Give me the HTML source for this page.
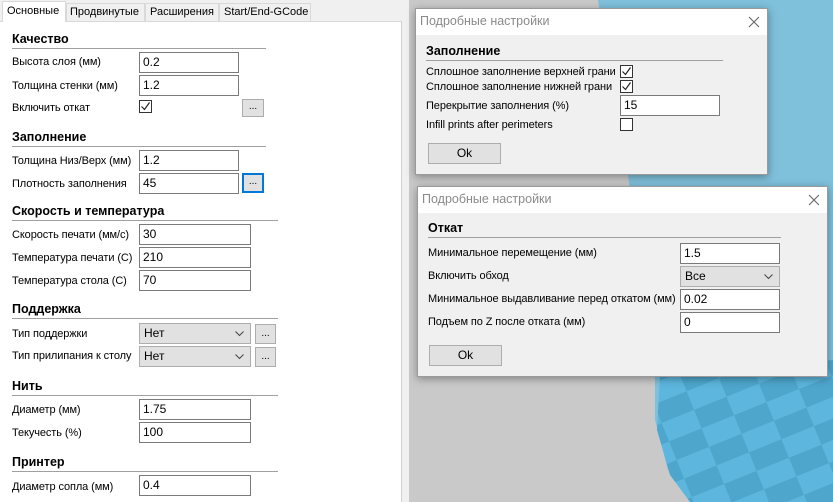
<!DOCTYPE html>
<html><head><meta charset="utf-8"><style>
*{box-sizing:border-box;margin:0;padding:0}
body{width:833px;height:502px;overflow:hidden;position:relative;background:#c9c9c9;font-family:"Liberation Sans","Noto Sans CJK JP",sans-serif;font-size:11px;color:#000}
.abs{position:absolute;white-space:nowrap}
.lbl{position:absolute;white-space:nowrap;letter-spacing:-0.1px}
.inp{position:absolute;background:#fff;border:1px solid #7a7a7a;height:21px;padding:2px 3px;font-size:12px;line-height:15px}
.sec{position:absolute;font-weight:bold;font-size:12.5px;border-bottom:1px solid #a0a0a0;padding-bottom:2px}
.btn{position:absolute;background:#e1e1e1;border:1px solid #adadad;font-size:10px;text-align:center;line-height:14px}
.cb{position:absolute;width:13px;height:13px;border:1px solid #333;background:#fff}
.cb svg{position:absolute;left:0px;top:0px}
.sel{position:absolute;background:#e1e1e1;border:1px solid #adadad;height:21px;padding:2px 4px;font-size:12px;line-height:15px}
.sel svg{position:absolute;right:6px;top:7px}
.dlg{position:absolute;background:#f0f0f0;border:1px solid #9a9a9a;box-shadow:0 2px 8px rgba(0,0,0,.35)}
.tt{height:26px;background:#fff;color:#8a8a8a;font-size:12.5px;padding:5px 0 0 4px;position:relative}
.tt svg{position:absolute;top:7px}
.okb{position:absolute;background:#e1e1e1;border:1px solid #adadad;width:73px;height:21px;text-align:center;font-size:12px;line-height:19px}
.tab{position:absolute;font-size:11px;white-space:nowrap;border:1px solid #d9d9d9;border-bottom:none}
</style></head><body>
<svg class="abs" style="left:0;top:0" width="833" height="502">
<defs><pattern id="ck" width="70" height="40" patternUnits="userSpaceOnUse" patternTransform="rotate(-22)">
<rect width="70" height="40" fill="#5cb6dd"/><rect width="35" height="20" fill="#4ea6cc"/><rect x="35" y="20" width="35" height="20" fill="#4ea6cc"/></pattern></defs>
<polygon points="598,0 833,0 833,502 690,502 668,470 655,420 655,380 628,175" fill="#7fc0db"/>
<polygon points="660,375 833,360 833,502 690,502 670,475 657,430" fill="url(#ck)"/>
</svg>
<div class="abs" style="left:0;top:0;width:409px;height:502px;background:#f0f0f0"></div>
<div class="abs" style="left:0;top:21px;width:402px;height:481px;background:#fff;border-right:1px solid #d0d0d0;border-top:1px solid #d9d9d9"></div>
<div class="tab" style="left:2px;top:1px;width:64px;height:21px;background:#fff;padding:3px 4px">Основные</div>
<div class="tab" style="left:66px;top:3px;width:79px;height:18px;padding:2px 3px">Продвинутые</div>
<div class="tab" style="left:145px;top:3px;width:74px;height:18px;padding:2px 4px">Расширения</div>
<div class="tab" style="left:219px;top:3px;width:92px;height:18px;padding:2px 4px">Start/End-GCode</div>

<div class="sec" style="left:12px;top:32px;width:254px">Качество</div>
<div class="lbl" style="left:12px;top:56px">Высота слоя (мм)</div><div class="inp" style="left:139px;top:52px;width:100px">0.2</div>
<div class="lbl" style="left:12px;top:80px">Толщина стенки (мм)</div><div class="inp" style="left:139px;top:75px;width:100px">1.2</div>
<div class="lbl" style="left:12px;top:102px">Включить откат</div>
<div class="cb" style="left:139px;top:100px"><svg width="11" height="11"><path d="M1.5 5.5l3 3 5-7" stroke="#222" fill="none" stroke-width="1.2"/></svg></div>
<div class="btn" style="left:242px;top:99px;width:22px;height:18px">...</div>

<div class="sec" style="left:12px;top:130px;width:254px">Заполнение</div>
<div class="lbl" style="left:12px;top:155px">Толщина Низ/Верх (мм)</div><div class="inp" style="left:139px;top:150px;width:100px">1.2</div>
<div class="lbl" style="left:12px;top:178px">Плотность заполнения</div><div class="inp" style="left:139px;top:173px;width:100px">45</div>
<div class="btn" style="left:242px;top:173px;width:22px;height:20px;border:2px solid #0078d7">...</div>

<div class="sec" style="left:12px;top:204px;width:266px">Скорость и температура</div>
<div class="lbl" style="left:12px;top:229px">Скорость печати (мм/с)</div><div class="inp" style="left:139px;top:224px;width:112px">30</div>
<div class="lbl" style="left:12px;top:252px">Температура печати (С)</div><div class="inp" style="left:139px;top:247px;width:112px">210</div>
<div class="lbl" style="left:12px;top:275px">Температура стола (С)</div><div class="inp" style="left:139px;top:270px;width:112px">70</div>

<div class="sec" style="left:12px;top:302px;width:266px">Поддержка</div>
<div class="lbl" style="left:12px;top:328px">Тип поддержки</div>
<div class="sel" style="left:139px;top:323px;width:112px">Нет<svg width="9" height="6"><path d="M0.5 0.5l4 4 4-4" stroke="#444" fill="none"/></svg></div>
<div class="btn" style="left:255px;top:324px;width:21px;height:20px;line-height:18px">...</div>
<div class="lbl" style="left:12px;top:350px">Тип прилипания к столу</div>
<div class="sel" style="left:139px;top:346px;width:112px">Нет<svg width="9" height="6"><path d="M0.5 0.5l4 4 4-4" stroke="#444" fill="none"/></svg></div>
<div class="btn" style="left:255px;top:347px;width:21px;height:20px;line-height:18px">...</div>

<div class="sec" style="left:12px;top:379px;width:266px">Нить</div>
<div class="lbl" style="left:12px;top:404px">Диаметр (мм)</div><div class="inp" style="left:139px;top:399px;width:112px">1.75</div>
<div class="lbl" style="left:12px;top:427px">Текучесть (%)</div><div class="inp" style="left:139px;top:422px;width:112px">100</div>
<div class="sec" style="left:12px;top:455px;width:266px">Принтер</div>
<div class="lbl" style="left:12px;top:481px">Диаметр сопла (мм)</div><div class="inp" style="left:139px;top:475px;width:112px">0.4</div>

<div class="dlg" style="left:415px;top:8px;width:353px;height:167px">
<div class="tt">Подробные настройки<svg style="left:332px" width="12" height="12"><path d="M1 1l10 10M11 1L1 11" stroke="#666" stroke-width="1.1"/></svg></div>
<div class="sec" style="left:10px;top:35px;width:297px">Заполнение</div>
<div class="lbl" style="left:10px;top:57px">Сплошное заполнение верхней грани</div>
<div class="cb" style="left:204px;top:56px"><svg width="11" height="11"><path d="M1.5 5.5l3 3 5-7" stroke="#222" fill="none" stroke-width="1.2"/></svg></div>
<div class="lbl" style="left:10px;top:72px">Сплошное заполнение нижней грани</div>
<div class="cb" style="left:204px;top:71px"><svg width="11" height="11"><path d="M1.5 5.5l3 3 5-7" stroke="#222" fill="none" stroke-width="1.2"/></svg></div>
<div class="lbl" style="left:10px;top:91px">Перекрытие заполнения (%)</div>
<div class="inp" style="left:204px;top:86px;width:100px">15</div>
<div class="lbl" style="left:10px;top:110px">Infill prints after perimeters</div>
<div class="cb" style="left:204px;top:109px"></div>
<div class="okb" style="left:12px;top:134px">Ok</div>
</div>

<div class="dlg" style="left:417px;top:186px;width:411px;height:191px">
<div class="tt">Подробные настройки<svg style="left:390px" width="12" height="12"><path d="M1 1l10 10M11 1L1 11" stroke="#666" stroke-width="1.1"/></svg></div>
<div class="sec" style="left:10px;top:34px;width:353px">Откат</div>
<div class="lbl" style="left:10px;top:60px">Минимальное перемещение (мм)</div>
<div class="inp" style="left:262px;top:56px;width:100px">1.5</div>
<div class="lbl" style="left:10px;top:83px">Включить обход</div>
<div class="sel" style="left:262px;top:79px;width:100px">Все<svg width="9" height="6"><path d="M0.5 0.5l4 4 4-4" stroke="#444" fill="none"/></svg></div>
<div class="lbl" style="left:10px;top:106px">Минимальное выдавливание перед откатом (мм)</div>
<div class="inp" style="left:262px;top:102px;width:100px">0.02</div>
<div class="lbl" style="left:10px;top:129px">Подъем по Z после отката (мм)</div>
<div class="inp" style="left:262px;top:125px;width:100px">0</div>
<div class="okb" style="left:11px;top:158px">Ok</div>
</div>
</body></html>
